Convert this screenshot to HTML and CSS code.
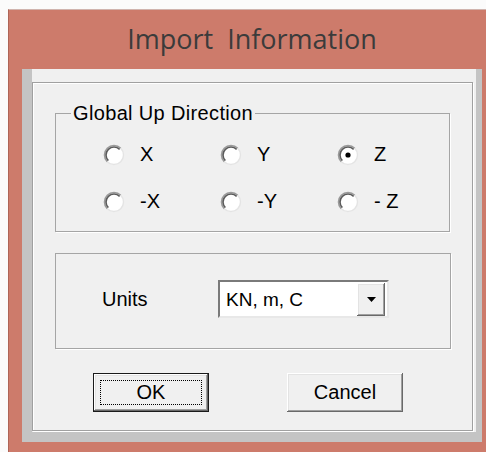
FILE: index.html
```html
<!DOCTYPE html>
<html lang="en">
<head>
<meta charset="utf-8">
<title>Import Information</title>
<link rel="stylesheet" href="styles.css">
</head>
<body>
  <div class="window">
    <div class="titlebar">Import&nbsp; Information</div>
    <div class="client">
      <div class="sheet">
        <div class="panel">

          <div class="group">
            <span class="group-title">Global Up Direction</span>
            <div class="radios">
              <label class="radio">
                <svg class="radio-dot" viewBox="0 0 22 22" width="22" height="22"><circle cx="11" cy="11" r="9.5" fill="#fff"/><path d="M4.28 17.72 A9.5 9.5 0 0 1 17.72 4.28" fill="none" stroke="#9a9a9a" stroke-width="1.6"/><path d="M5.34 16.66 A8 8 0 0 1 16.66 5.34" fill="none" stroke="#5a5a5a" stroke-width="1.6"/><path d="M17.72 4.28 A9.5 9.5 0 0 1 4.28 17.72" fill="none" stroke="#e4e4e4" stroke-width="1.4"/></svg>
                <span>X</span>
              </label>
              <label class="radio">
                <svg class="radio-dot" viewBox="0 0 22 22" width="22" height="22"><circle cx="11" cy="11" r="9.5" fill="#fff"/><path d="M4.28 17.72 A9.5 9.5 0 0 1 17.72 4.28" fill="none" stroke="#9a9a9a" stroke-width="1.6"/><path d="M5.34 16.66 A8 8 0 0 1 16.66 5.34" fill="none" stroke="#5a5a5a" stroke-width="1.6"/><path d="M17.72 4.28 A9.5 9.5 0 0 1 4.28 17.72" fill="none" stroke="#e4e4e4" stroke-width="1.4"/></svg>
                <span>Y</span>
              </label>
              <label class="radio">
                <svg class="radio-dot" viewBox="0 0 22 22" width="22" height="22"><circle cx="11" cy="11" r="9.5" fill="#fff"/><path d="M4.28 17.72 A9.5 9.5 0 0 1 17.72 4.28" fill="none" stroke="#9a9a9a" stroke-width="1.6"/><path d="M5.34 16.66 A8 8 0 0 1 16.66 5.34" fill="none" stroke="#5a5a5a" stroke-width="1.6"/><path d="M17.72 4.28 A9.5 9.5 0 0 1 4.28 17.72" fill="none" stroke="#e4e4e4" stroke-width="1.4"/><circle cx="11" cy="11" r="2.6" fill="#000"/></svg>
                <span>Z</span>
              </label>
              <label class="radio">
                <svg class="radio-dot" viewBox="0 0 22 22" width="22" height="22"><circle cx="11" cy="11" r="9.5" fill="#fff"/><path d="M4.28 17.72 A9.5 9.5 0 0 1 17.72 4.28" fill="none" stroke="#9a9a9a" stroke-width="1.6"/><path d="M5.34 16.66 A8 8 0 0 1 16.66 5.34" fill="none" stroke="#5a5a5a" stroke-width="1.6"/><path d="M17.72 4.28 A9.5 9.5 0 0 1 4.28 17.72" fill="none" stroke="#e4e4e4" stroke-width="1.4"/></svg>
                <span>-X</span>
              </label>
              <label class="radio">
                <svg class="radio-dot" viewBox="0 0 22 22" width="22" height="22"><circle cx="11" cy="11" r="9.5" fill="#fff"/><path d="M4.28 17.72 A9.5 9.5 0 0 1 17.72 4.28" fill="none" stroke="#9a9a9a" stroke-width="1.6"/><path d="M5.34 16.66 A8 8 0 0 1 16.66 5.34" fill="none" stroke="#5a5a5a" stroke-width="1.6"/><path d="M17.72 4.28 A9.5 9.5 0 0 1 4.28 17.72" fill="none" stroke="#e4e4e4" stroke-width="1.4"/></svg>
                <span>-Y</span>
              </label>
              <label class="radio">
                <svg class="radio-dot" viewBox="0 0 22 22" width="22" height="22"><circle cx="11" cy="11" r="9.5" fill="#fff"/><path d="M4.28 17.72 A9.5 9.5 0 0 1 17.72 4.28" fill="none" stroke="#9a9a9a" stroke-width="1.6"/><path d="M5.34 16.66 A8 8 0 0 1 16.66 5.34" fill="none" stroke="#5a5a5a" stroke-width="1.6"/><path d="M17.72 4.28 A9.5 9.5 0 0 1 4.28 17.72" fill="none" stroke="#e4e4e4" stroke-width="1.4"/></svg>
                <span>- Z</span>
              </label>
            </div>
          </div>

          <div class="units-box">
            <span class="units-label">Units</span>
            <div class="combo">
              <span class="combo-value">KN, m, C</span>
              <span class="combo-btn">
                <svg viewBox="0 0 9 5" width="9" height="5"><polygon points="0,0 9,0 4.5,5" fill="#000"/></svg>
              </span>
            </div>
          </div>

          <div class="buttons">
            <button class="btn btn-default"><span class="focus">OK</span></button>
            <button class="btn">Cancel</button>
          </div>

        </div>
      </div>
    </div>
  </div>
</body>
</html>
```

FILE: styles.css
```css
html, body {
  margin: 0;
}

body {
  width: 486px;
  height: 452px;
  overflow: hidden;
  background: #fbfbfb;
  padding: 9px 0 0 8px;
  box-sizing: border-box;
  font-family: "Liberation Sans", Arial, sans-serif;
  font-size: 20px;
  color: #000;
}

/* window frame */
.window {
  width: 488px;
  background: #cd7b6b;
  border-top: 1px solid #d0b4ae;
  border-left: 1px solid #ae6557;
  padding: 0 14px 14px 13px;
  box-sizing: border-box;
}

.titlebar {
  padding: 11px 0 12px;
  line-height: 36px;
  font-family: "Open Sans", "Noto Sans", sans-serif;
  font-size: 27px;
  color: #3b3b3b;
  text-align: center;
}

/* client area */
.client {
  width: 460px;
  height: 373px;
  background: #c4c4c4;
  padding: 0 6px 10px 10px;
  box-sizing: border-box;
}

.sheet {
  height: 363px;
  background: #f0f0f0;
  padding: 13px 3px 0 0;
  box-sizing: border-box;
}

.panel {
  height: 349px;
  border: 1px solid #a0a0a0;
  box-shadow: 1px 1px 0 #fff, inset 1px 1px 0 #fff;
  box-sizing: border-box;
}

/* direction group */
.group {
  margin: 30px 22px 0 22px;
  border: 1px solid #a5a5a5;
  box-shadow: 1px 1px 0 #fff;
  padding-bottom: 6px;
}

.group-title {
  display: table;
  margin: -12px 0 0 15px;
  padding: 0 2px;
  line-height: 23px;
  letter-spacing: 0.35px;
  background: #f0f0f0;
}

.radios {
  margin-top: 6px;
  padding-left: 47px;
  display: grid;
  grid-template-columns: repeat(3, 117px);
  grid-auto-rows: 47px;
}

.radio {
  display: flex;
  align-items: center;
  gap: 15px;
  line-height: 23px;
}

.radio-dot {
  display: block;
  flex: none;
}

/* units box */
.units-box {
  margin: 21px 21px 0 22px;
  border: 1px solid #a5a5a5;
  box-shadow: 1px 1px 0 #fff;
  padding: 26px 0 30px 46px;
  display: flex;
  align-items: center;
}

.units-label {
  width: 116px;
  line-height: 23px;
}

.combo {
  width: 171px;
  height: 38px;
  box-sizing: border-box;
  background: #fff;
  border: 2px solid;
  border-color: #7a7a7a #e8e8e8 #e8e8e8 #7a7a7a;
  display: flex;
  align-items: center;
}

.combo-value {
  flex: 1;
  padding-left: 6px;
  font-size: 19px;
  line-height: 23px;
}

.combo-btn {
  width: 28px;
  height: 33px;
  margin: 1px 2px 0 0;
  box-sizing: border-box;
  background: #f0f0f0;
  box-shadow: inset -1px -1px 0 #696969, inset 1px 1px 0 #fff, inset -2px -2px 0 #a0a0a0, inset 2px 2px 0 #e3e3e3;
  display: flex;
  align-items: center;
  justify-content: center;
}

.combo-btn svg {
  display: block;
}

/* push buttons */
.buttons {
  margin-top: 24px;
  padding-left: 60px;
  display: flex;
  gap: 78px;
}

.btn {
  width: 116px;
  height: 39px;
  margin: 0;
  padding: 0;
  box-sizing: border-box;
  border: none;
  background: #f0f0f0;
  box-shadow: inset -1px -1px 0 #696969, inset 1px 1px 0 #fff, inset -2px -2px 0 #a0a0a0, inset 2px 2px 0 #e3e3e3;
  font-family: "Liberation Sans", Arial, sans-serif;
  font-size: 20px;
  color: #000;
  display: flex;
  align-items: center;
  justify-content: center;
}

.btn-default {
  border: 1px solid #1a1a1a;
}

.focus {
  width: 102px;
  height: 25px;
  box-sizing: border-box;
  border: 1px dotted #000;
  display: flex;
  align-items: center;
  justify-content: center;
  line-height: 23px;
}
```
